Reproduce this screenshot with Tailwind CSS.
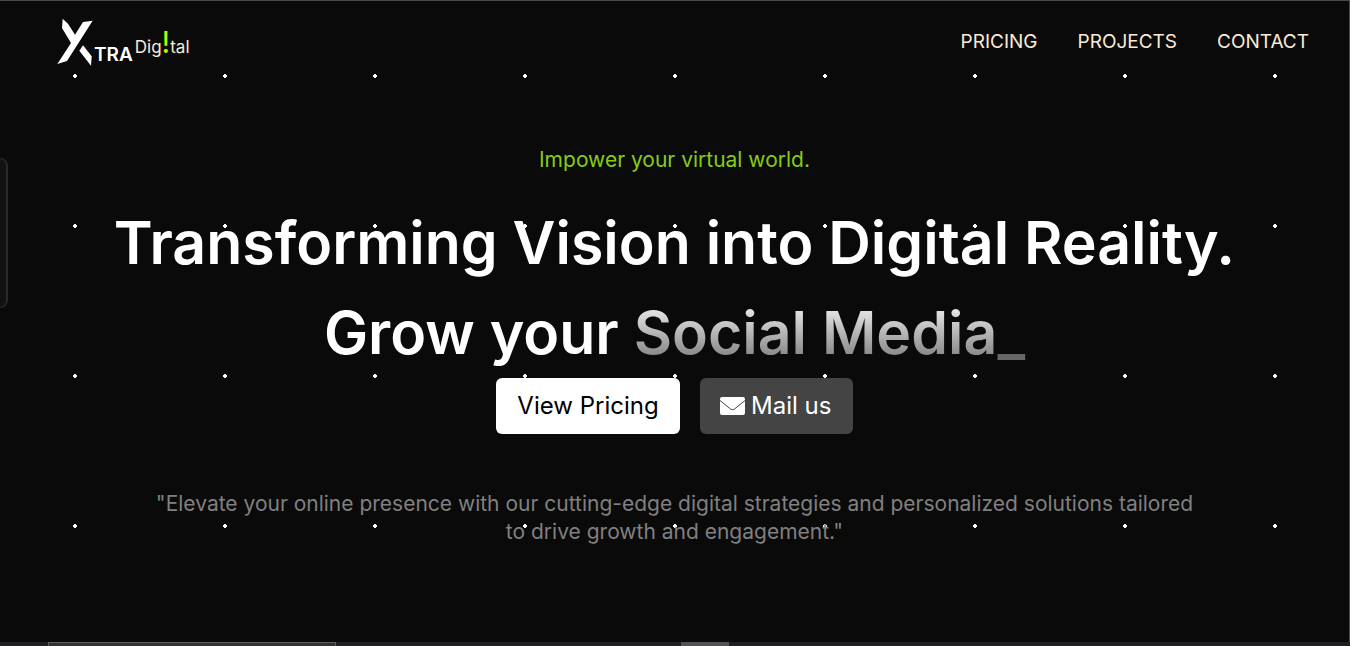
<!DOCTYPE html>
<html lang="en">
<head>
<meta charset="utf-8">
<meta name="viewport" content="width=device-width, initial-scale=1">
<title>Xtra Digital</title>
<script src="https://cdn.jsdelivr.net/npm/@tailwindcss/browser@4"></script>
</head>
<body class="relative flex min-h-screen flex-col overflow-x-hidden bg-[#0a0a0a] font-[Inter,sans-serif] text-white">
<div class="flex flex-1 flex-col border-t border-r border-[#4a4a4a] bg-[radial-gradient(circle,#fff_2px,transparent_2px)] bg-[size:150px_150px]">
  <header class="flex h-[82px] items-center justify-between pr-10 pl-[57px]">
    <a href="#" class="flex items-center" aria-label="Xtra Digital">
      <svg class="h-12 w-9" viewBox="50 55 108 144" fill="#fff" aria-hidden="true">
        <path d="M67 57 83 72 104 105 128 67 157 63 80 184 51 193 92 130 65 85Z"/>
        <path d="M128 137 154 170 152 198 117 153Z"/>
      </svg>
      <span class="mt-6 ml-px text-[19px] leading-none font-semibold">TRA</span>
      <span class="ml-0.5 flex items-baseline text-[17px] leading-none text-[#faebd7]">Dig<span class="text-3xl leading-none text-[#aaff00]">!</span>tal</span>
    </a>
    <nav class="flex gap-10 text-[19px] leading-7 text-[#faebd7]">
      <a href="#pricing">PRICING</a>
      <a href="#projects">PROJECTS</a>
      <a href="#contact">CONTACT</a>
    </nav>
  </header>
  <main class="flex flex-col items-center pt-[63px] pb-20 text-center">
    <p class="text-[21px] leading-7 text-[#86cc16]">Impower your virtual world.</p>
    <h1 class="mt-6 text-[59px] leading-[90px] font-semibold">Transforming Vision into Digital Reality.<br>Grow your <span class="bg-linear-to-b from-white to-[#737373] bg-clip-text text-transparent">Social Media</span><span class="text-[#666]">_</span></h1>
    <div class="flex gap-5 text-2xl">
      <button class="h-14 min-w-[184px] rounded-md bg-white px-5 text-black">View Pricing</button>
      <button class="flex h-14 min-w-[153px] items-center gap-1.5 rounded-md bg-[#444] px-5">
        <svg class="h-[18px] w-[25px]" viewBox="0 0 25 18" aria-hidden="true"><rect width="25" height="18" rx="2" fill="#fff"/><path d="M0 3.5 10.5 12Q12.5 13.5 14.5 12L25 3.5" fill="none" stroke="#444" stroke-width="1"/></svg>
        Mail us
      </button>
    </div>
    <p class="mt-14 text-[21px] leading-7 text-[#808080]">"Elevate your online presence with our cutting-edge digital strategies and personalized solutions tailored<br>to drive growth and engagement."</p>
  </main>
</div>
<div class="flex h-1 bg-[#1f1f22] pl-12">
  <div class="w-72 border-x border-t border-[#606060] bg-[#333]"></div>
  <div class="ml-[345px] w-12 bg-[#525255]"></div>
</div>
<aside class="absolute top-[158px] left-0 h-[150px] w-2 rounded-r-lg border-y border-r-2 border-[#2a2a2a] bg-[#121212]"></aside>
</body>
</html>
